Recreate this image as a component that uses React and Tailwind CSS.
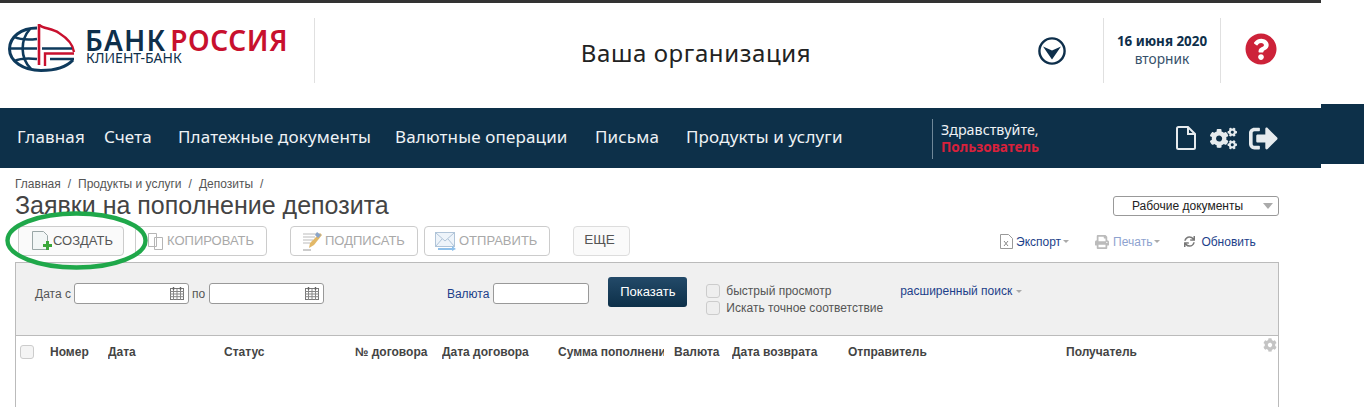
import React from "react";
import { FaCogs, FaCog, FaSignOutAlt, FaQuestionCircle, FaPrint, FaSync } from "react-icons/fa";

const nav = [
  ["Главная", "w-[87px]"],
  ["Счета", "w-[74px]"],
  ["Платежные документы", "w-[217px]"],
  ["Валютные операции", "w-[200px]"],
  ["Письма", "w-[91px]"],
  ["Продукты и услуги", "w-[247px]"],
];

const columns = [
  ["Номер", "w-[58px]"],
  ["Дата", "w-[116px]"],
  ["Статус", "w-[131px]"],
  ["№ договора", "w-[87px]"],
  ["Дата договора", "w-[116px]"],
  ["Сумма пополнения", "w-[106px] mr-[10px]"],
  ["Валюта", "w-[58px]"],
  ["Дата возврата", "w-[116px]"],
  ["Отправитель", "w-[218px]"],
  ["Получатель", "w-[100px]"],
];

function Logo() {
  return (
    <svg width="70" height="52" viewBox="0 0 70 52" fill="none" className="shrink-0">
      <path d="M29 6C13 6 1.500 15 1.500 27S15 48.500 33 48.500c14 0 26-4 32-10.500" stroke="#0e3a5c" strokeWidth="3" />
      <path d="M2 26.500h27M6 15c7 3 15 3 23 2M6 39c7-3 15-3 23-2" stroke="#0e3a5c" strokeWidth="2.400" />
      <path d="M22 7c-10 11-10 29 1 40" stroke="#0e3a5c" strokeWidth="2.600" />
      <path d="M31 2v41" stroke="#c8102e" strokeWidth="2.600" />
      <path d="M31 3c5 4 13 3 20 8 8 5 14 11 15 19" stroke="#c8102e" strokeWidth="2.400" />
      <path d="M37 44V31.500h29" stroke="#c8102e" strokeWidth="2.400" />
      <path d="M34 26.500h30M42 37h24" stroke="#0e3a5c" strokeWidth="2.400" />
    </svg>
  );
}

function CalendarIcon() {
  return (
    <svg width="14" height="13" viewBox="0 0 14 13" className="shrink-0">
      <rect x="0.5" y="1.5" width="13" height="11" fill="#fff" stroke="#777" />
      <path d="M0 4.500h14M0 7h14M0 9.700h14M3.500 2v11M7 2v11M10.500 2v11" stroke="#888" strokeWidth="1" />
      <path d="M3.500 0v3M10.500 0v3" stroke="#666" strokeWidth="1.400" />
    </svg>
  );
}

function DateInput() {
  return (
    <div className="flex items-center justify-end w-[115px] h-[21px] bg-white border border-[#999] rounded-[3px] pr-[4px]">
      <CalendarIcon />
    </div>
  );
}

function ToolButton({ icon, label, disabled, className }) {
  return (
    <div className={`flex items-center h-[30px] border border-[#ccc] rounded-[4px] ${disabled ? "text-[#a9a9a9]" : "text-[#555]"} ${className}`}>
      {icon}
      <span className="text-[13px]">{label}</span>
    </div>
  );
}

function Caret({ className }) {
  return <span className={`inline-block w-0 h-0 border-x-[3px] border-x-transparent border-t-[3px] border-t-[#aaa] ${className}`} />;
}

export default function App() {
  return (
    <div className="relative w-[1364px] h-[407px] overflow-hidden bg-white font-['Liberation_Sans',Arial,sans-serif]">
      <div className="w-[1321px] h-[3px] bg-[#333]" />

      <header className="w-[1321px] h-[105px] flex pt-[15px] font-['Noto_Sans',sans-serif] text-[#0e2f4b]">
        <div className="w-[315px] h-[65px] border-r border-[#e0e0e0] flex pl-[8px] pt-[4px]">
          <Logo />
          <div className="ml-[8px] mt-[5px]">
            <div className="text-[28px] leading-[26px] font-semibold whitespace-nowrap flex">
              <span className="tracking-[1.2px] -ml-[1px] mr-[4px]">БАНК</span>
              <span className="text-[#c8102e] tracking-[0.5px]">РОССИЯ</span>
            </div>
            <div className="text-[14px] leading-[10px] whitespace-nowrap">КЛИЕНТ-БАНК</div>
          </div>
        </div>
        <div className="w-[697px] h-[65px] flex items-center justify-center pt-[5px]">
          <span className="text-[24px] ml-[65px] text-[#222] tracking-[0.6px] whitespace-nowrap">Ваша организация</span>
        </div>
        <div className="w-[91px] h-[65px] flex items-center pl-[26px] pt-[1px]">
          <svg width="28" height="28" viewBox="0 0 28 28" fill="none">
            <circle cx="14" cy="14" r="12.600" stroke="#0e2f4b" strokeWidth="2.400" />
            <path d="M5 9.500l9 4 9-4-9 13z" fill="#0e2f4b" />
          </svg>
        </div>
        <div className="w-[118px] h-[65px] border-x border-[#e0e0e0] flex flex-col items-center justify-center pb-[2px]">
          <div className="text-[13.400px] leading-[18px] font-bold whitespace-nowrap">16 июня 2020</div>
          <div className="text-[13.700px] leading-[18px] text-[#36506a]">вторник</div>
        </div>
        <div className="pl-[24px] pt-[15px]">
          <FaQuestionCircle className="text-[32px] text-[#cd2239]" />
        </div>
      </header>

      <nav className="relative w-[1321px] h-[60px] bg-[#0d3049] flex items-center pl-[17px] font-['Noto_Sans',sans-serif] text-[#eef2f5]">
        {nav.map(([label, w]) => (
          <span key={label} className={`text-[17px] tracking-[0.15px] -mt-[2px] whitespace-nowrap ${w}`}>{label}</span>
        ))}
        <div className="h-[40px] border-l border-[#6f8798] pl-[8px] mt-[2px] -ml-[1px] w-[244px] shrink-0">
          <div className="text-[14.300px] leading-[18px] mt-[2px] whitespace-nowrap">Здравствуйте,</div>
          <div className="text-[13.600px] leading-[16px] font-bold text-[#d8213b] whitespace-nowrap">Пользователь</div>
        </div>
        <div className="flex items-center text-[#e6ebee] shrink-0">
          <svg width="20" height="24" viewBox="0 0 20 24" fill="none" stroke="#e6ebee" strokeWidth="2">
            <path d="M1 2.500a1.500 1.500 0 0 1 1.500-1.500H12l7 7v13.500a1.500 1.500 0 0 1-1.500 1.500h-15A1.500 1.500 0 0 1 1 21.500z" />
            <path d="M12 1v7h7" />
          </svg>
          <FaCogs className="text-[27px] ml-[14px]" />
          <FaSignOutAlt className="text-[29px] ml-[12px]" />
        </div>
      </nav>
      <div className="absolute left-[1321px] top-[104px] w-[43px] h-[60px] bg-[#0d3049]" />

      <main className="w-[1279px] pl-[15px] text-[#555]">
        <div className="flex text-[12px] leading-[14px] pt-[9px] gap-[7px] whitespace-pre">
          <span>Главная</span><span>/</span><span>Продукты и услуги</span><span>/</span><span>Депозиты</span><span>/</span>
        </div>
        <div className="flex justify-between items-start">
          <h1 className="text-[25px] leading-[28px] text-[#444]">Заявки на пополнение депозита</h1>
          <div className="flex items-center w-[166px] h-[20px] mt-[5px] border border-[#999] rounded-[3px] text-[12px] text-[#222]">
            <span className="w-[147px] text-center">Рабочие документы</span>
            <span className="w-0 h-0 ml-[2px] border-x-[5px] border-x-transparent border-t-[6px] border-t-[#aaa]" />
          </div>
        </div>

        <div className="flex items-center h-[31px] mt-[6px]">
          <ToolButton
            className="w-[106px] ml-[3px] pl-[12px] bg-[#fafafa]"
            label="СОЗДАТЬ"
            icon={
              <svg width="22" height="22" viewBox="0 0 22 22" className="shrink-0">
                <path d="M1.500 1.500h11l4 4v14h-15z" fill="#f2f6f6" stroke="#9aa7a7" />
                <path d="M12 14h3v-3h3v3h3v3h-3v3h-3v-3h-3z" fill="#3aa63a" />
              </svg>
            }
          />
          <ToolButton
            disabled
            className="w-[132px] ml-[11px] pl-[11px]"
            label="КОПИРОВАТЬ"
            icon={
              <svg width="20" height="20" viewBox="0 0 20 20" fill="none" stroke="#b5b5b5" className="shrink-0">
                <path d="M1.500 2.500h8v13h-8zM7.500 6.500h8v12h-8z" fill="#fff" />
              </svg>
            }
          />
          <ToolButton
            disabled
            className="w-[128px] ml-[23px] pl-[11px]"
            label="ПОДПИСАТЬ"
            icon={
              <svg width="20" height="20" viewBox="0 0 20 20" className="mr-[3px] shrink-0">
                <path d="M1 3h14M1 6h12M1 9h10M1 12h7" stroke="#bbb" strokeWidth="1" />
                <path d="M18 2l2 2-8 10-5 3 1-5z" fill="#e2b868" />
                <path d="M15 1l4 3-3 3-3-3z" fill="#8aa4c8" />
                <path d="M1 19h8" stroke="#999" />
              </svg>
            }
          />
          <ToolButton
            disabled
            className="w-[126px] ml-[6px] pl-[10px]"
            label="ОТПРАВИТЬ"
            icon={
              <svg width="22" height="20" viewBox="0 0 22 20" fill="none" className="mr-[2px] shrink-0">
                <rect x="0.5" y="1.5" width="19" height="14" fill="#eef4fa" stroke="#b0c4d8" />
                <path d="M1 2l9 8 9-8M1 15l6-7M19 15l-6-7" stroke="#b0c4d8" />
                <path d="M3 17h14v-2l4 3-4 2v-1H3z" fill="#8fc0ea" />
              </svg>
            }
          />
          <div className="w-[57px] h-[30px] ml-[23px] pr-[4px] flex items-center justify-center border border-[#ddd] rounded-[4px] bg-[#fafafa] text-[13.500px] text-[#555]">ЕЩЕ</div>
          <div className="flex items-center ml-[370px] text-[12px] text-[#1d3f8a] whitespace-nowrap mt-[2px]">
            <svg width="13" height="15" viewBox="0 0 13 15" fill="none" className="mr-[3px]">
              <path d="M.5.500h8l4 4v10H.5z" stroke="#999" />
              <path d="M4 7l4 5M8 7l-4 5" stroke="#888" />
            </svg>
            <span>Экспорт</span>
            <Caret className="ml-[2px]" />
            <FaPrint className="text-[14px] text-[#bbb] ml-[26px] mr-[4px]" />
            <span className="text-[#8ea2cf]">Печать</span>
            <Caret className="ml-[2px]" />
            <FaSync className="text-[11px] text-[#777] ml-[24px] mr-[6px]" />
            <span>Обновить</span>
          </div>
        </div>

        <section className="h-[74px] mt-[6px] bg-[#f0f0f0] border border-[#bbb] flex text-[12px]">
          <div className="flex items-center h-[21px] mt-[20px] ml-[19px]">
            <span className="mr-[3px]">Дата с</span>
            <DateInput />
            <span className="mx-[3px] w-[14px]">по</span>
            <DateInput />
          </div>
          <div className="flex items-center h-[21px] mt-[20px] ml-[123px]">
            <span className="text-[#1d3f8a] mr-[4px]">Валюта</span>
            <div className="w-[96px] h-[21px] bg-white border border-[#999] rounded-[3px]" />
          </div>
          <div className="w-[79px] h-[30px] mt-[14px] ml-[19px] rounded-[3px] bg-gradient-to-b from-[#234a69] to-[#0d3049] text-white text-[13px] flex items-center justify-center">Показать</div>
          <div className="ml-[19px] mt-[21px] flex flex-col gap-[3px]">
            {["быстрый просмотр", "Искать точное соответствие"].map((t) => (
              <div key={t} className="flex items-center h-[14px] whitespace-nowrap">
                <span className="w-[14px] h-[14px] bg-[#eee] border border-[#ccc] rounded-[3px] mr-[6px]" />
                {t}
              </div>
            ))}
          </div>
          <div className="ml-[17px] mt-[21px] h-[14px] flex items-center text-[#1d3f8a] whitespace-nowrap">
            расширенный поиск
            <Caret className="ml-[4px]" />
          </div>
        </section>

        <section className="relative h-[72px] border-x border-[#bbb] flex items-start text-[12px] font-bold text-[#444] pt-[8px] pl-[4px]">
          <span className="w-[14px] h-[14px] bg-[#f4f4f4] border border-[#ccc] rounded-[3px] mr-[16px] mt-[1px] shrink-0" />
          {columns.map(([label, w]) => (
            <span key={label} className={`overflow-hidden whitespace-nowrap leading-[16px] shrink-0 ${w}`}>{label}</span>
          ))}
          <FaCog className="absolute right-[1px] top-[2px] text-[14px] text-[#c4c4c4]" />
        </section>
      </main>

      <svg className="absolute left-[4px] top-[210px]" width="146" height="62" viewBox="0 0 146 62" fill="none">
        <ellipse cx="72.500" cy="30.500" rx="69" ry="27" stroke="#1fa84a" strokeWidth="4.400" />
      </svg>
    </div>
  );
}
